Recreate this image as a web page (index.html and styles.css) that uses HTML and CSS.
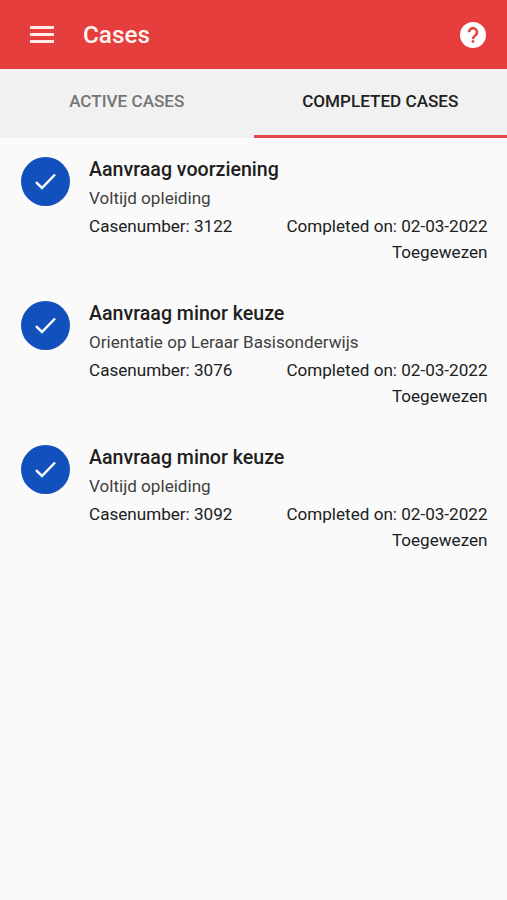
FILE: index.html
```html
<!DOCTYPE html>
<html lang="nl">
<head>
<meta charset="utf-8">
<meta name="viewport" content="width=device-width">
<title>Cases</title>
<link rel="stylesheet" href="styles.css">
</head>
<body>
<header class="bar">
  <svg class="menu" viewBox="0 0 24 17"><path d="M0 1.500h24M0 8.500h24M0 15.500h24"/></svg>
  <h1 class="title">Cases</h1>
  <svg class="help" viewBox="0 0 26 26"><circle cx="13" cy="13" r="13"/><path class="mark" d="M9 10.300a4 4 0 1 1 6.900 2.600c-1.700 1.500-2.900 2.100-2.900 4"/><path class="mark" d="M13 18.200v2.500"/></svg>
</header>
<nav class="tabs">
  <div class="tab">ACTIVE CASES</div>
  <div class="tab active">COMPLETED CASES</div>
</nav>
<main class="list">
  <article class="case">
    <div class="badge"><svg class="check" viewBox="0 0 21 17"><path d="M1 9.200 7 15 20 1.500"/></svg></div>
    <div class="info">
      <h2 class="name">Aanvraag voorziening</h2>
      <p class="sub">Voltijd opleiding</p>
      <div class="row"><span>Casenumber: 3122</span><span>Completed on: 02-03-2022</span></div>
      <p class="status">Toegewezen</p>
    </div>
  </article>
  <article class="case">
    <div class="badge"><svg class="check" viewBox="0 0 21 17"><path d="M1 9.200 7 15 20 1.500"/></svg></div>
    <div class="info">
      <h2 class="name">Aanvraag minor keuze</h2>
      <p class="sub">Orientatie op Leraar Basisonderwijs</p>
      <div class="row"><span>Casenumber: 3076</span><span>Completed on: 02-03-2022</span></div>
      <p class="status">Toegewezen</p>
    </div>
  </article>
  <article class="case">
    <div class="badge"><svg class="check" viewBox="0 0 21 17"><path d="M1 9.200 7 15 20 1.500"/></svg></div>
    <div class="info">
      <h2 class="name">Aanvraag minor keuze</h2>
      <p class="sub">Voltijd opleiding</p>
      <div class="row"><span>Casenumber: 3092</span><span>Completed on: 02-03-2022</span></div>
      <p class="status">Toegewezen</p>
    </div>
  </article>
</main>
</body>
</html>
```
FILE: styles.css
```css
* { box-sizing: border-box; margin: 0; }
body { min-height: 900px; background: #fafafa; color: #202020; font-family: Roboto, sans-serif; }
.bar { display: flex; align-items: center; height: 69px; padding: 0 21px 0 30px; background: #e53e3d; color: #fff; }
.menu { width: 24px; height: 17px; fill: none; stroke: #ffebe9; stroke-width: 2.8; }
.title { flex: 1; margin-left: 29px; padding-top: 1px; font-size: 24.3px; line-height: 28px; font-weight: 500; color: #fff3f0; }
.help { width: 26px; height: 26px; fill: #fff; }
.mark { fill: none; stroke: #e53e3d; stroke-width: 2.5; }
.tabs { display: grid; grid-template-columns: 1fr 1fr; height: 68.5px; background: #f1f1f1; }
.tab { padding-top: 21px; text-align: center; font-size: 17.1px; line-height: 22px; font-weight: 500; color: #757575; }
.tab.active { color: #202020; border-bottom: 3px solid #e0474a; }
.list { padding: 18.8px 19.5px 0 20.5px; }
.case { display: flex; height: 144.2px; }
.badge { display: flex; align-items: center; justify-content: center; width: 49px; height: 49px; margin-top: 0.4px; border-radius: 50%; background: #1250bd; }
.check { width: 21px; height: 17px; fill: none; stroke: #fff; stroke-width: 2.5; }
.info { flex: 1; margin: -0.5px 0 0 19.500px; }
.name { font-size: 19.6px; line-height: 28px; font-weight: 500; }
.sub { font-size: 17.1px; line-height: 28px; color: #404040; }
.row { display: flex; justify-content: space-between; font-size: 17.1px; line-height: 28px; }
.status { text-align: right; font-size: 17.1px; line-height: 24px; }
```
